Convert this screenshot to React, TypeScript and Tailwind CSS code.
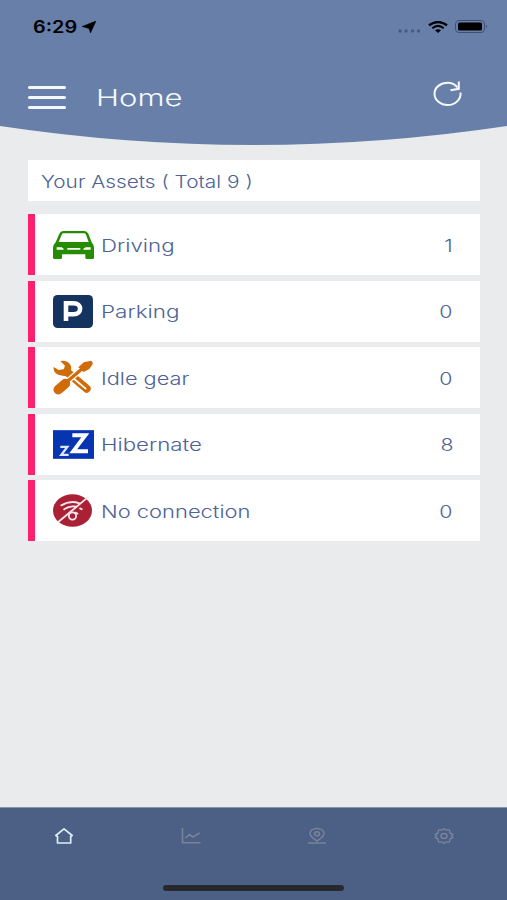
import clsx from 'clsx'
import type { ReactNode } from 'react'

interface Asset {
  name: string,
  count: number,
  icon: ReactNode,
  labelClassName: string,
}

const CarIcon = () => (
  <svg viewBox="0 0 123 84" className="h-7 w-[41px]" fill="#258c04">
    <path
      fillRule="evenodd"
      d="M30 0H94Q102 0 106 8L116 34Q123 42 123 50V80Q123 84 119 84H101Q97 84 97 80V70H27V80Q27 84 23 84H4Q0 84 0 80V50Q0 42 8 34L19 8Q23 0 30 0ZM31 7Q28 7 26 11L17 33H107L99 11Q97 7 94 7ZM11 49V56H32V53L26 49ZM43 51V56H82V51ZM98 49L91 53V56H113V49Z"
    />
  </svg>
)

const ParkingIcon = () => (
  <svg viewBox="0 0 40 33" className="h-[33px] w-10">
    <rect width="40" height="33" rx="4.5" fill="#14335f" />
    <path
      d="M13 26V8.3H20.5C29.3 8.3 29.3 19.3 20.5 19.3H13"
      fill="none"
      stroke="#fff"
      strokeWidth="4.6"
    />
  </svg>
)

const ToolsIcon = () => (
  <svg viewBox="0 0 120 105" className="h-[35px] w-10" fill="none">
    <path d="M42 36L101 86" stroke="#cf6c08" strokeWidth="24" strokeLinecap="round" />
    <path d="M60 54L98 86" stroke="#fff" strokeWidth="5" strokeLinecap="round" />
    <path
      d="M22 3Q42 -1 52 14Q58 26 51 38L40 48Q20 50 8 40Q0 31 2 21L17 30L32 28L36 17Z"
      fill="#cf6c08"
    />
    <path d="M36 70L90 24" stroke="#fff" strokeWidth="17" />
    <path d="M16 89L37 71" stroke="#cf6c08" strokeWidth="29" strokeLinecap="round" />
    <path d="M36 70L94 21" stroke="#cf6c08" strokeWidth="10" />
    <path d="M76 22L92 7L115 2Q121 5 118 14L109 27L92 36Z" fill="#cf6c08" />
  </svg>
)

const HibernateIcon = () => (
  <svg viewBox="0 0 123 86" className="h-[29px] w-[41px]" fill="none" stroke="#fff">
    <rect width="123" height="86" fill="#0734b1" stroke="none" />
    <path d="M58 15H97L61 63H105" strokeWidth="12" />
    <path d="M22 50H43L25 74H47" strokeWidth="7" stroke="#dce7ff" />
  </svg>
)

const NoConnectionIcon = () => (
  <svg viewBox="0 0 118 99" className="h-[33px] w-[39px]" fill="none" stroke="#fbe9ec">
    <ellipse cx="59" cy="49.500" rx="59" ry="49.500" fill="#aa2136" stroke="none" />
    <g strokeWidth="5.500" strokeLinecap="round">
      <path d="M25 34Q52 17 80 28" />
      <path d="M34 46Q50 34 70 38" />
      <path d="M82 43L87 46" />
      <path d="M67 56L74 59" />
      <circle cx="59" cy="66" r="11" />
    </g>
    <path d="M14 86L106 9" strokeWidth="5.500" />
  </svg>
)

const assets: Asset[] = [
  { name: 'Driving', count: 1, icon: <CarIcon />, labelClassName: 'scale-x-[1.31]' },
  { name: 'Parking', count: 0, icon: <ParkingIcon />, labelClassName: 'scale-x-[1.32]' },
  { name: 'Idle gear', count: 0, icon: <ToolsIcon />, labelClassName: 'scale-x-[1.28]' },
  { name: 'Hibernate', count: 8, icon: <HibernateIcon />, labelClassName: 'scale-x-[1.31]' },
  { name: 'No connection', count: 0, icon: <NoConnectionIcon />, labelClassName: 'scale-x-[1.29]' },
]

const StatusBar = () => (
  <div className="flex h-[53px] items-center justify-between pr-[19px] pl-[33px] text-black">
    <div className="flex items-center gap-1.5">
      <span className="w-[43px] text-[17px] leading-5 font-semibold">
        <span className="inline-block origin-left scale-x-[1.17]">6:29</span>
      </span>
      <svg viewBox="0 0 14 12" className="h-3 w-3.5">
        <path d="M14 0L8.500 12L7 7.500L0 5.500Z" fill="currentColor" stroke="currentColor" strokeWidth=".5" />
      </svg>
    </div>
    <div className="flex items-center">
      <svg viewBox="0 0 23 4" className="mt-2 mr-[7px] h-1 w-[23px]" fill="#475b82">
        <circle cx="2" cy="2" r="1.700" />
        <circle cx="8" cy="2" r="1.700" />
        <circle cx="14.500" cy="2" r="1.700" />
        <circle cx="20.500" cy="2" r="1.700" />
      </svg>
      <svg viewBox="0 0 20 12" className="mr-[7px] h-3 w-5" fill="none" stroke="currentColor">
        <path d="M1 4.300Q10 -2.300 19 4.300" strokeWidth="2.300" />
        <path d="M4.300 7.200Q10 2.700 15.700 7.200" strokeWidth="2.100" />
        <path d="M7 9.300Q10 7 13 9.300L10 12Z" fill="currentColor" stroke="none" />
      </svg>
      <svg viewBox="0 0 33 13" className="h-[13px] w-[33px]">
        <rect x=".5" y=".5" width="29" height="12" rx="3.500" fill="none" stroke="#40506f" />
        <rect x="3" y="2.500" width="24" height="8" rx="1.500" fill="currentColor" />
        <path d="M31 4.500Q33 6.500 31 8.500Z" fill="#40506f" />
      </svg>
    </div>
  </div>
)

const Header = () => (
  <header className="h-[145px] shrink-0 bg-[#687fa9]">
    <StatusBar />
    <div className="flex h-[73px] items-center pr-11 pb-[1px] pl-7 text-[#f4f9ff]">
      <button type="button" aria-label="Menu" className="mt-[17px] flex w-[38px] flex-col gap-[7px]">
        <span className="h-[3px] rounded-full bg-current" />
        <span className="h-[3px] rounded-full bg-current" />
        <span className="h-[3px] rounded-full bg-current" />
      </button>
      <h1 className="mt-[17px] ml-[30px] text-[23px] leading-7 font-light">
        <span className="inline-block origin-left scale-x-[1.35]">Home</span>
      </h1>
      <button type="button" aria-label="Refresh" className="mt-[9px] ml-auto">
        <svg
          viewBox="0 0 30 26"
          className="h-[26px] w-[30px]"
          fill="none"
          stroke="currentColor"
          strokeWidth="2"
        >
          <path d="M27.500 11.500C28.300 18.500 22 24 14.800 24S1.500 19 1.500 12.700S7.500 1.800 14.800 1.800C18.800 1.800 22 3.500 24.500 6.500" />
          <path d="M25.800 .5V7.800L17.500 9.300" />
        </svg>
      </button>
    </div>
    <svg viewBox="0 0 507 19" className="block h-[19px] w-full" preserveAspectRatio="none">
      <path d="M0 0Q253.500 38 507 0V19H0Z" fill="#e9ebed" />
    </svg>
  </header>
)

const AssetRow = ({ asset }: { asset: Asset }) => (
  <li className="flex h-[61px] items-center border-l-[7px] border-[#ff206f] bg-white pr-[27px] pl-[18px]">
    <div className="flex w-12 items-center">{asset.icon}</div>
    <span className={clsx('mt-0.5 origin-left whitespace-nowrap', asset.labelClassName)}>
      {asset.name}
    </span>
    <span className="mt-0.5 ml-auto origin-right scale-x-[1.25]">{asset.count}</span>
  </li>
)

const TabBar = () => (
  <footer className="flex h-[93px] shrink-0 flex-col items-center border-t border-[#8997b1] bg-[#4c6085]">
    <nav className="grid h-[55px] w-full grid-cols-4 place-items-center pl-px text-[#77849b]">
      <svg viewBox="0 0 20 18" className="h-[18px] w-5 text-[#dceefa]" fill="none" stroke="currentColor" strokeWidth="1.700">
        <path d="M1.800 8.500L10 1.800L18.200 8.500L16.700 9.500V16H3.500V9.500Z" strokeLinejoin="round" />
      </svg>
      <svg viewBox="0 0 20 18" className="h-[18px] w-5" fill="none" stroke="currentColor" strokeWidth="1.600">
        <path d="M1.500 1V15.800H19.500M4.500 11L8.500 7.500L12 10L18.500 6" />
      </svg>
      <svg viewBox="0 0 20 18" className="h-[18px] w-5" fill="none" stroke="currentColor" strokeWidth="1.500">
        <path d="M10 14C6 11.500 3 9.500 3 6.500C3 3.500 6 1.500 10 1.500S17 3.500 17 6.500C17 9.500 14 11.500 10 14Z" />
        <ellipse cx="10" cy="6.800" rx="2.500" ry="2" />
        <path d="M1 16H19" />
      </svg>
      <svg viewBox="0 0 20 18" className="h-[18px] w-5" fill="none" stroke="currentColor" strokeWidth="1.500">
        <path
          d="M8 3L10 1.500L12 3L15.500 3L16 6L18.800 7.500L17.500 9L18.800 10.800L16 12L15.500 15H12L10 16.500L8 15H4.500L4 12L1.200 10.800L2.500 9L1.200 7.500L4 6L4.500 3Z"
          strokeLinejoin="round"
        />
        <ellipse cx="10" cy="9" rx="3" ry="2.500" />
      </svg>
    </nav>
    <div className="mt-[22px] h-1.5 w-[181px] rounded-full bg-[#28292e]" />
  </footer>
)

export default function App() {
  return (
    <div className="flex h-screen w-full flex-col overflow-hidden bg-[#e9ebed] font-['Inter',sans-serif]">
      <Header />
      <main className="flex-1 pt-[15.400px] pr-[27px] pl-7 text-[17px] leading-6 font-[350] text-[#4d6296]">
        <h2 className="flex h-[41px] items-center bg-white pl-[13px]">
          <span className="mt-0.5 origin-left scale-x-[1.225] whitespace-nowrap">
            Your Assets ( Total 9 )
          </span>
        </h2>
        <ul className="mt-[13px] flex flex-col gap-[5.500px]">
          {assets.map((asset) => (
            <AssetRow key={asset.name} asset={asset} />
          ))}
        </ul>
      </main>
      <TabBar />
    </div>
  )
}
